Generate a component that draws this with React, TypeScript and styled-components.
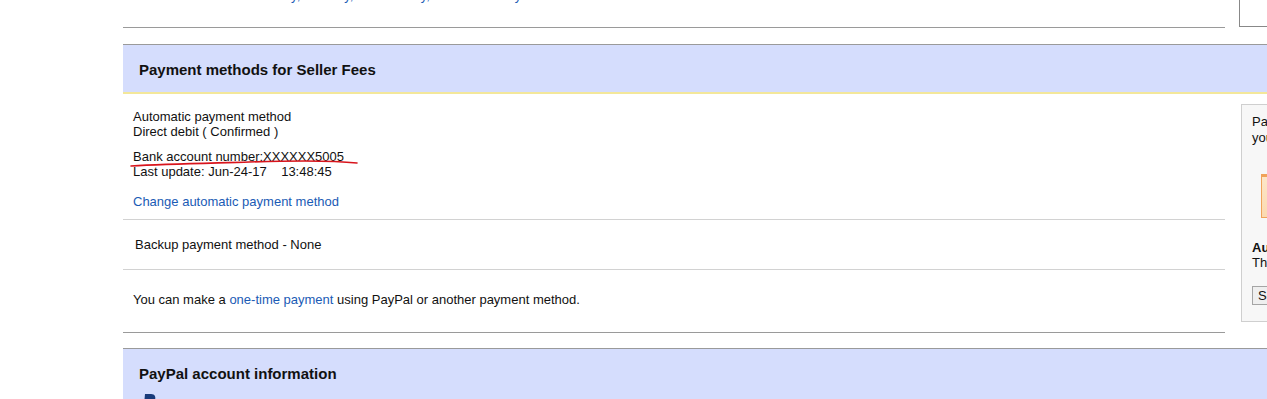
import React from "react";
import styled, { createGlobalStyle } from "styled-components";

const GlobalStyle = createGlobalStyle`
  html, body { margin: 0; padding: 0; background: #fff; overflow: hidden; }
  body { font-family: Arial, "Liberation Sans", sans-serif; font-size: 13px; color: #111; }
`;

const Page = styled.div`
  width: 1400px;
  padding-left: 123px;
  box-sizing: border-box;
`;

const TopRow = styled.div`
  display: flex;
  align-items: flex-end;
  margin-top: -20px;
`;

const TopLeft = styled.div`
  width: 1102px;
  height: 48px;
  border-bottom: 1px solid #9a9a9a;
  box-sizing: border-box;
  padding-left: 132px;
`;

const TopLinks = styled.div`
  font-size: 13px;
  line-height: 15px;
  color: #1a5bb5;
  padding-top: 8px;
`;

const TopBox = styled.div`
  margin-left: 14px;
  width: 60px;
  height: 47px;
  border: 1px solid #888;
  box-sizing: border-box;
  margin-bottom: 1px;
`;

const SectionHeader = styled.div<{ $tall?: boolean }>`
  margin-top: ${(p) => (p.$tall ? "15px" : "16px")};
  background: #d5ddfd;
  border-top: 1px solid #9a9a9a;
  border-bottom: 2px solid #f3e79a;
  padding: 16px 16px ${(p) => (p.$tall ? "4px" : "14px")};
`;

const HeaderTitle = styled.h2`
  margin: 0;
  font-size: 15px;
  line-height: 17px;
  font-weight: bold;
  color: #111;
`;

const Body = styled.div`
  display: flex;
  align-items: flex-start;
`;

const MainCol = styled.div`
  width: 1102px;
  flex: none;
`;

const Block = styled.div<{ $pt: number; $pb: number; $pl?: number; $dark?: boolean }>`
  padding: ${(p) => p.$pt}px 10px ${(p) => p.$pb}px ${(p) => p.$pl ?? 10}px;
  border-bottom: 1px solid ${(p) => (p.$dark ? "#9a9a9a" : "#d2d2d2")};
`;

const Para = styled.p<{ $mt?: number }>`
  margin: ${(p) => p.$mt ?? 0}px 0 0;
  line-height: 15px;
  position: relative;
`;

const Link = styled.a`
  color: #1a5bb5;
  text-decoration: none;
`;

const Scribble = styled.svg`
  position: absolute;
  left: -4px;
  top: 9px;
  pointer-events: none;
`;

const Side = styled.div`
  margin: 10px 0 0 16px;
  width: 220px;
  height: 218px;
  border: 1px solid #cfcfcf;
  background: #f7f7f7;
  box-sizing: border-box;
  padding: 9px 10px;
  line-height: 16px;
  flex: none;
`;

const Promo = styled.div`
  margin: 28px 0 0 9px;
  height: 44px;
  border: 1px solid #f0a35a;
  border-top-width: 3px;
  background: linear-gradient(#fde6c8, #fbd9b0);
  box-sizing: border-box;
`;

const SideTitle = styled.div`
  margin-top: 22px;
  font-weight: bold;
  line-height: 15px;
`;

const SideText = styled.div`
  line-height: 15px;
`;

const SideButton = styled.button`
  display: block;
  margin-top: 16px;
  font-family: inherit;
  font-size: 13px;
  height: 19px;
  padding: 0 5px;
  border: 1px solid #a5a5a5;
  background: #efefef;
  color: #111;
`;

const PayPalMark = styled.svg`
  display: block;
  margin: 11px 0 0 4px;
`;

export default function App() {
  return (
    <>
      <GlobalStyle />
      <Page>
        <TopRow>
          <TopLeft>
            <TopLinks>Privacy, Security, Accessibility, Terms of Policy</TopLinks>
          </TopLeft>
          <TopBox />
        </TopRow>

        <SectionHeader>
          <HeaderTitle>Payment methods for Seller Fees</HeaderTitle>
        </SectionHeader>

        <Body>
          <MainCol>
            <Block $pt={15} $pb={10}>
              <Para>Automatic payment method</Para>
              <Para>Direct debit ( Confirmed )</Para>
              <Para $mt={10}>
                Bank account number:XXXXXX5005
                <Scribble width="240" height="12" viewBox="0 0 240 12">
                  <path
                    d="M2 8 C 40 6, 90 5, 120 4 S 200 2, 228 5"
                    stroke="#d8141c"
                    strokeWidth="1.6"
                    fill="none"
                    strokeLinecap="round"
                  />
                </Scribble>
              </Para>
              <Para>Last update: Jun-24-17&nbsp;&nbsp;&nbsp; 13:48:45</Para>
              <Para $mt={15}>
                <Link href="#">Change automatic payment method</Link>
              </Para>
            </Block>
            <Block $pt={17} $pb={17} $pl={12}>
              <Para>Backup payment method - None</Para>
            </Block>
            <Block $pt={22} $pb={25} $dark>
              <Para>
                You can make a <Link href="#">one-time payment</Link> using PayPal or another payment method.
              </Para>
            </Block>
          </MainCol>
          <Side>
            <div>PayPal makes paying</div>
            <div>your seller fees easy</div>
            <Promo />
            <SideTitle>Automatic payments</SideTitle>
            <SideText>The easiest way to pay</SideText>
            <SideButton>Set up</SideButton>
          </Side>
        </Body>

        <SectionHeader $tall>
          <HeaderTitle>PayPal account information</HeaderTitle>
          <PayPalMark width="14" height="18" viewBox="0 0 14 18">
            <path d="M2 1 H8 C12 1 13 4 12 7 C11 10 8 11 6 11 H4.5 L3.5 17 H0.5 Z" fill="#183a7a" />
          </PayPalMark>
        </SectionHeader>
      </Page>
    </>
  );
}
